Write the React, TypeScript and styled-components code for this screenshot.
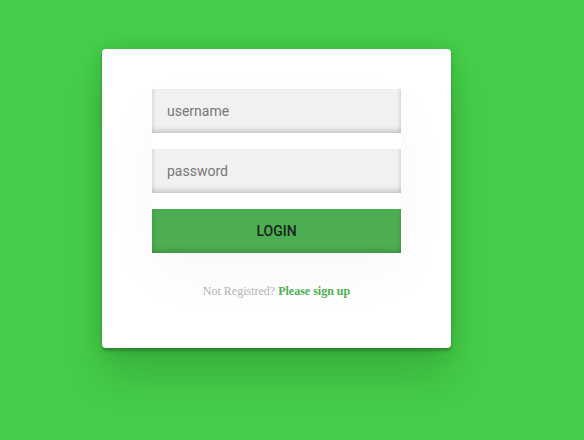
import React from "react";
import styled, { createGlobalStyle } from "styled-components";

const Global = createGlobalStyle`
  html, body { margin: 0; padding: 0; }
  body {
    background: #45ce49;
    font-family: Roboto, "Liberation Sans", Arial, sans-serif;
    min-height: 440px;
  }
`;

const Page = styled.div`
  padding: 49px 0 0 102px;
`;

const Card = styled.div`
  box-sizing: border-box;
  width: 349px;
  height: 299px;
  background: #ffffff;
  border-radius: 4px;
  padding: 40px 50px 0;
  display: flex;
  flex-direction: column;
  box-shadow: 0 0 20px rgba(0, 0, 0, 0.12), 0 3px 3px rgba(0, 0, 0, 0.22),
    0 30px 40px rgba(0, 60, 0, 0.18);
`;

const Form = styled.form`
  display: flex;
  flex-direction: column;
  gap: 16px;
  margin: 0;
  box-shadow: 0 20px 60px rgba(0, 0, 0, 0.03);
`;

const Input = styled.input`
  box-sizing: border-box;
  width: 249px;
  height: 44px;
  border: 0;
  outline: none;
  margin: 0;
  padding: 0 15px;
  background: #f1f1f1;
  font-family: Roboto, "Liberation Sans", Arial, sans-serif;
  font-size: 14px;
  color: #555;
  caret-color: #000;
  box-shadow: inset 0 -6px 6px -4px rgba(20, 20, 50, 0.22),
    inset 4px 0 4px -3px rgba(0, 0, 0, 0.1),
    inset -4px 0 4px -3px rgba(0, 0, 0, 0.12);
  &::placeholder {
    color: #777;
  }
`;

const Button = styled.button`
  box-sizing: border-box;
  width: 249px;
  height: 44px;
  border: 0;
  outline: none;
  margin: 0;
  padding: 0;
  background: #4cae50;
  font-family: Roboto, "Liberation Sans", Arial, sans-serif;
  font-size: 14px;
  font-weight: 500;
  color: #1a231a;
  text-transform: uppercase;
  cursor: pointer;
  box-shadow: inset 0 -6px 6px -4px rgba(0, 0, 0, 0.18),
    inset 4px 0 4px -3px rgba(0, 0, 0, 0.12),
    inset -4px 0 4px -3px rgba(0, 0, 0, 0.12);
`;

const Message = styled.p`
  margin: 31px 0 0;
  width: 249px;
  text-align: center;
  font-family: "Liberation Serif", "Times New Roman", serif;
  font-size: 12px;
  color: #b3b3b3;
`;

const SignUp = styled.a`
  color: #4caf50;
  font-weight: bold;
  text-decoration: none;
`;

export default function App() {
  return (
    <>
      <Global />
      <Page>
        <Card>
          <Form onSubmit={(e) => e.preventDefault()}>
            <Input type="text" placeholder="username" />
            <Input type="password" placeholder="password" autoFocus />
            <Button type="submit">login</Button>
          </Form>
          <Message>
            Not Registred? <SignUp href="#">Please sign up</SignUp>
          </Message>
        </Card>
      </Page>
    </>
  );
}
